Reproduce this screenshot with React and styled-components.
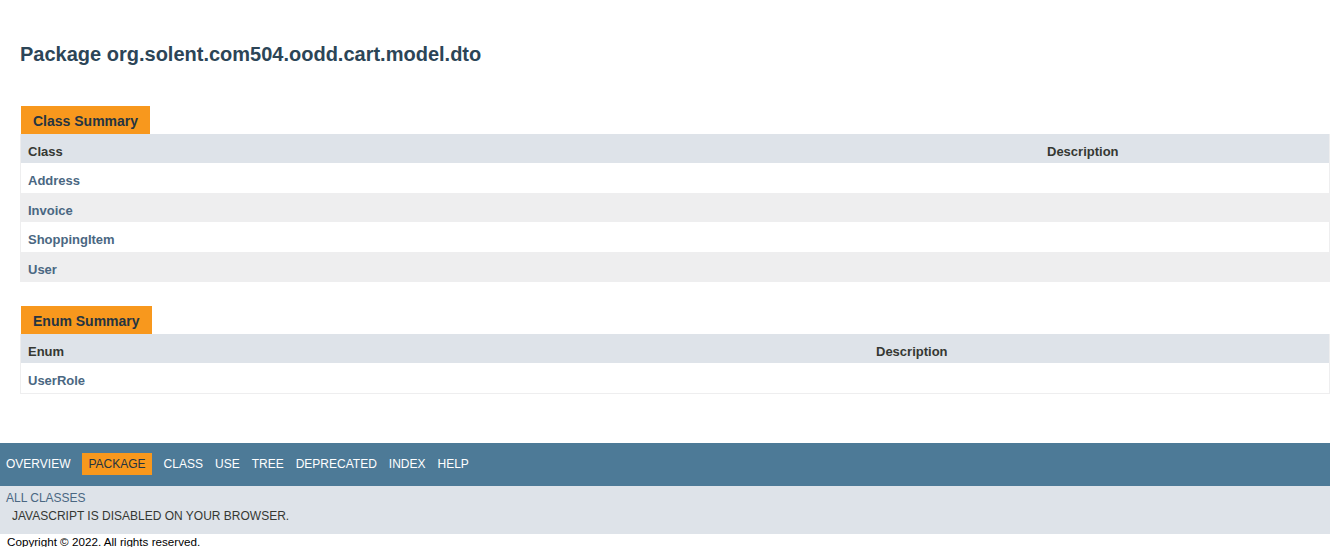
import React from "react";
import styled, { createGlobalStyle } from "styled-components";

const GlobalStyle = createGlobalStyle`
  html, body {
    margin: 0;
    padding: 0;
    background: #ffffff;
  }
  body {
    font-family: "Liberation Sans", Arial, Helvetica, sans-serif;
    font-size: 14px;
    color: #353833;
    overflow: hidden;
  }
`;

const Page = styled.div`
  width: 1330px;
`;

const Header = styled.header`
  padding: 43px 20px 0 20px;
`;

const Title = styled.h1`
  margin: 0;
  font-size: 20px;
  line-height: 23px;
  font-weight: bold;
  color: #2c4557;
`;

const Content = styled.main`
  padding: 40px 0 49px 20px;
`;

const Summary = styled.section`
  margin-bottom: ${(p) => p.$gap || 0}px;
`;

const Caption = styled.div`
  display: inline-block;
  margin-left: 1px;
  background: #f8981d;
  color: #253441;
  font-weight: bold;
  font-size: 14px;
  line-height: 16px;
  padding: 7px 12px 5px 12px;
  vertical-align: top;
`;

const Table = styled.div`
  display: grid;
  grid-template-columns: ${(p) => p.$first}px 1fr;
  border-left: 1px solid #eeeeef;
  border-right: 1px solid #eeeeef;
  border-bottom: 1px solid #eeeeef;
`;

const HeadCell = styled.div`
  background: #dee3e9;
  font-size: 13px;
  font-weight: bold;
  line-height: 18px;
  padding: 9px 3px 2px 7px;
  color: #353833;
`;

const Cell = styled.div`
  background: ${(p) => (p.$alt ? "#eeeeef" : "#ffffff")};
  font-size: 13px;
  line-height: 18.5px;
  padding: 9px 3px 2px 7px;
`;

const TypeLink = styled.a`
  color: #4a6782;
  font-weight: bold;
  text-decoration: none;
`;

const NavBar = styled.nav`
  background: #4d7a97;
  height: 33px;
  padding-top: 10px;
`;

const NavList = styled.ul`
  display: flex;
  align-items: flex-start;
  margin: 0;
  padding: 0;
  list-style: none;
`;

const NavItem = styled.li`
  padding: 5px 6px;
  margin: ${(p) => (p.$active ? "0 6px" : "0")};
  background: ${(p) => (p.$active ? "#f8981d" : "transparent")};
  color: ${(p) => (p.$active ? "#253441" : "#ffffff")};
  font-size: 12px;
  line-height: 12px;
  text-transform: uppercase;
  white-space: nowrap;
`;

const SubNav = styled.div`
  background: #dee3e9;
  padding: 5px 0 11px 0;
`;

const AllClasses = styled.a`
  display: block;
  padding-left: 6px;
  color: #4a6782;
  font-size: 12px;
  line-height: 14px;
  text-decoration: none;
  text-transform: uppercase;
`;

const NoScript = styled.div`
  margin-top: 4px;
  padding-left: 12px;
  font-size: 12px;
  line-height: 14px;
  color: #353833;
  text-transform: uppercase;
`;

const LegalCopy = styled.p`
  margin: 1px 0 0 7px;
  font-size: 11.67px;
  line-height: 13px;
  color: #000000;
`;

const classes = ["Address", "Invoice", "ShoppingItem", "User"];
const enums = ["UserRole"];
const navItems = ["Overview", "Package", "Class", "Use", "Tree", "Deprecated", "Index", "Help"];

function SummaryTable({ caption, kind, items, first, gap }) {
  return (
    <Summary $gap={gap}>
      <Caption>{caption}</Caption>
      <Table $first={first}>
        <HeadCell>{kind}</HeadCell>
        <HeadCell>Description</HeadCell>
        {items.map((name, i) => (
          <React.Fragment key={name}>
            <Cell $alt={i % 2 === 1}>
              <TypeLink href="#">{name}</TypeLink>
            </Cell>
            <Cell $alt={i % 2 === 1} />
          </React.Fragment>
        ))}
      </Table>
    </Summary>
  );
}

export default function App() {
  return (
    <Page>
      <GlobalStyle />
      <Header>
        <Title>Package org.solent.com504.oodd.cart.model.dto</Title>
      </Header>
      <Content>
        <SummaryTable caption="Class Summary" kind="Class" items={classes} first={1019} gap={24} />
        <SummaryTable caption="Enum Summary" kind="Enum" items={enums} first={848} gap={0} />
      </Content>
      <NavBar>
        <NavList>
          {navItems.map((n) => (
            <NavItem key={n} $active={n === "Package"}>
              {n}
            </NavItem>
          ))}
        </NavList>
      </NavBar>
      <SubNav>
        <AllClasses href="#">All Classes</AllClasses>
        <NoScript>JavaScript is disabled on your browser.</NoScript>
      </SubNav>
      <LegalCopy>Copyright © 2022. All rights reserved.</LegalCopy>
    </Page>
  );
}
